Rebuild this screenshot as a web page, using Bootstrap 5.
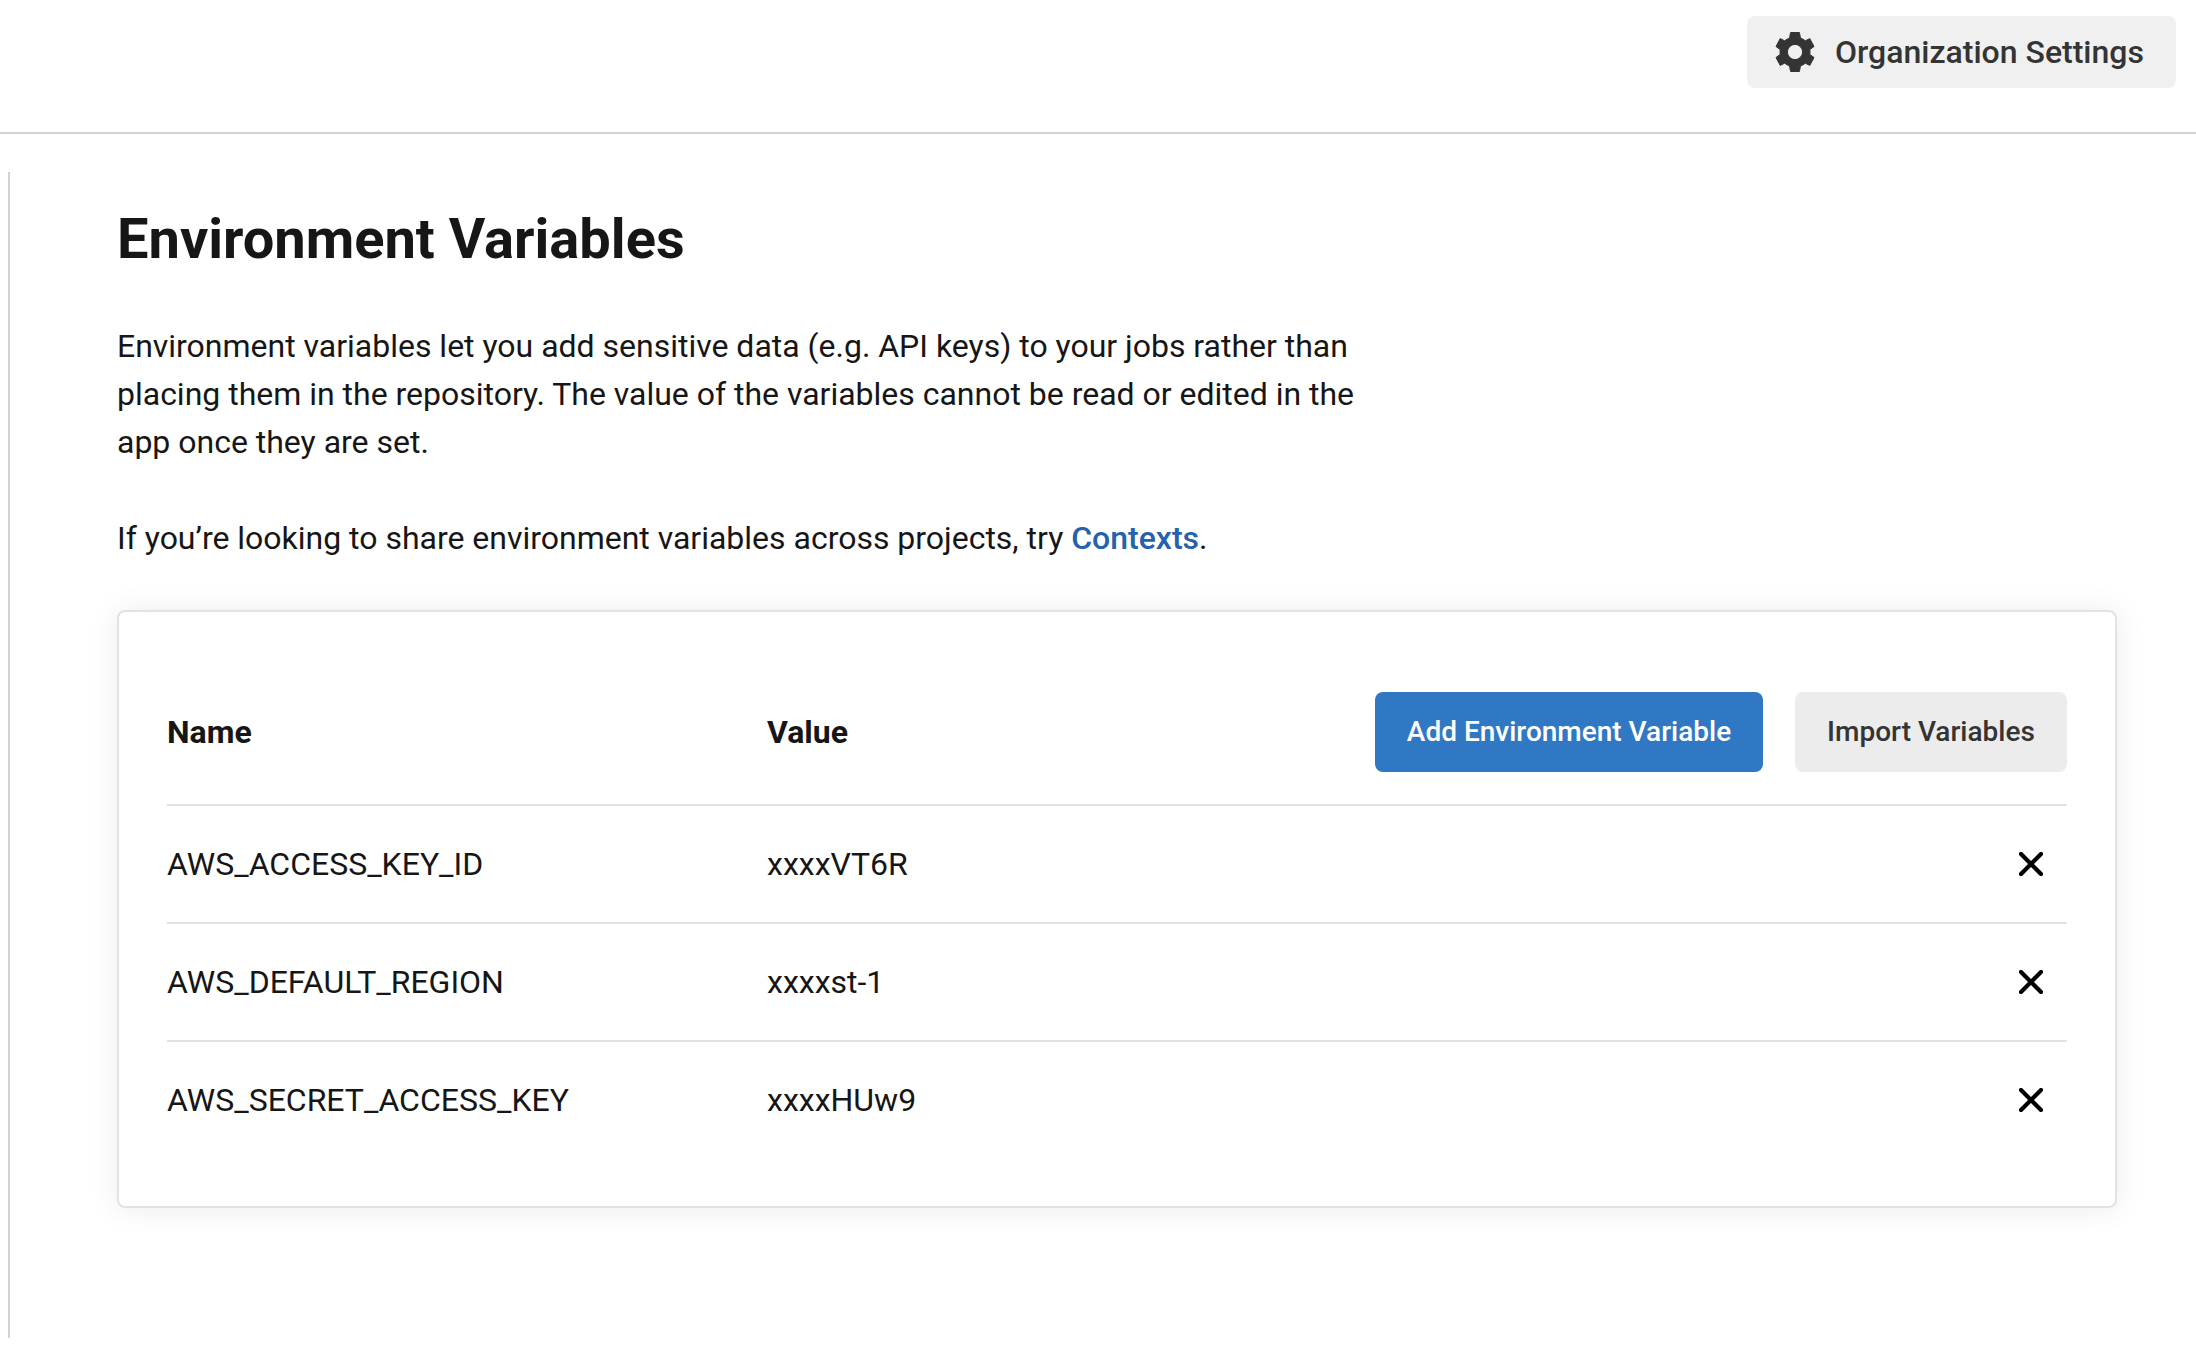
<!DOCTYPE html>
<html lang="en">
<head>
<meta charset="utf-8">
<meta name="viewport" content="width=device-width, initial-scale=1">
<title>Environment Variables</title>
<link href="https://cdn.jsdelivr.net/npm/bootstrap@5.3.0/dist/css/bootstrap.min.css" rel="stylesheet">
<style>
body{font-family:Roboto,"Liberation Sans",sans-serif;font-size:32px;line-height:48px;color:#161616;background:#fff;-webkit-font-smoothing:antialiased}
.topbar{height:134px;border-bottom:2px solid #d3d3d3;padding:16px 20px 0 0}
.btn{--bs-btn-font-weight:500;--bs-btn-border-width:0;--bs-btn-border-radius:8px;--bs-btn-font-size:28px;--bs-btn-padding-x:0;--bs-btn-padding-y:0;--bs-btn-line-height:40px;white-space:nowrap}
.btn-org{--bs-btn-bg:#f0f0f0;--bs-btn-color:#343434;--bs-btn-font-size:32px;width:429px;height:72px;gap:16px;padding-left:24px}
.btn-add{--bs-btn-bg:#3078c4;--bs-btn-color:#fff;width:388px;height:80px}
.btn-import{--bs-btn-bg:#ececec;--bs-btn-color:#343434;width:272px;height:80px}
.panel{margin:38px 0 0 8px;height:1166px;border-left:2px solid #d3d3d3;padding:35px 79px 0 107px}
.page-title{font-size:56px;line-height:64px;font-weight:700;margin-bottom:51px}
.intro{width:1250px;letter-spacing:-.01px}
.intro p{margin-bottom:48px}
.intro a{color:#2561ac;font-weight:500;text-decoration:none}
.vars{border:2px solid #e2e2e2;border-radius:8px;box-shadow:0 1px 30px rgba(0,0,0,.08);padding:80px 48px 46px;height:598px}
.vars-row{height:118px;border-bottom:2px solid #e2e2e2}
.vars-row.vars-head{height:114px;padding-bottom:32px}
.vars-row:last-child{border-bottom-color:transparent}
.vars-actions{gap:32px}
.cell-name{width:600px}
.btn-remove{width:72px;height:72px}
</style>
</head>
<body>
<header class="topbar d-flex justify-content-end align-items-start">
  <button class="btn btn-org d-flex align-items-center" type="button">
    <svg width="48" height="48" viewBox="-12 -12 24 24" fill="#343434" stroke="#343434" stroke-width=".5" stroke-linejoin="round" aria-hidden="true"><path fill-rule="evenodd" d="M-2.2-9.75H2.2L2.75-6.95Q4-6.5 5.15-5.6L7.4-6.7 9.5-2.75 7.4-1.2Q7.6 0 7.4 1.2L9.5 2.75 7.4 6.7 5.15 5.6Q4 6.5 2.75 6.95L2.2 9.75H-2.2L-2.75 6.95Q-4 6.5-5.15 5.6L-7.4 6.7-9.5 2.75-7.4 1.2Q-7.6 0-7.4-1.2L-9.5-2.75-7.4-6.7-5.15-5.6Q-4-6.5-2.75-6.95ZM0-3.8A3.8 3.8 0 1 0 0 3.8 3.8 3.8 0 1 0 0-3.8Z"/></svg>
    <span>Organization Settings</span>
  </button>
</header>
<main class="panel">
  <h1 class="page-title">Environment Variables</h1>
  <div class="intro">
    <p>Environment variables let you add sensitive data (e.g. API keys) to your jobs rather than<br>placing them in the repository. The value of the variables cannot be read or edited in the<br>app once they are set.</p>
    <p>If you’re looking to share environment variables across projects, try <a href="#">Contexts</a>.</p>
  </div>
  <section class="vars bg-white">
    <div class="vars-row vars-head d-flex align-items-center fw-bold">
      <div class="cell-name">Name</div>
      <div class="flex-grow-1">Value</div>
      <div class="vars-actions d-flex">
        <button class="btn btn-add" type="button">Add Environment Variable</button>
        <button class="btn btn-import" type="button">Import Variables</button>
      </div>
    </div>
    <div class="vars-row d-flex align-items-center">
      <div class="cell-name">AWS_ACCESS_KEY_ID</div>
      <div class="flex-grow-1">xxxxVT6R</div>
      <button class="btn btn-remove" type="button" aria-label="Remove"><svg class="d-block mx-auto" width="24" height="24" viewBox="0 0 24 24" aria-hidden="true"><path d="M2 2l20 20M22 2L2 22" stroke="#000" stroke-width="4.2" stroke-linecap="round"/></svg></button>
    </div>
    <div class="vars-row d-flex align-items-center">
      <div class="cell-name">AWS_DEFAULT_REGION</div>
      <div class="flex-grow-1">xxxxst-1</div>
      <button class="btn btn-remove" type="button" aria-label="Remove"><svg class="d-block mx-auto" width="24" height="24" viewBox="0 0 24 24" aria-hidden="true"><path d="M2 2l20 20M22 2L2 22" stroke="#000" stroke-width="4.2" stroke-linecap="round"/></svg></button>
    </div>
    <div class="vars-row d-flex align-items-center">
      <div class="cell-name">AWS_SECRET_ACCESS_KEY</div>
      <div class="flex-grow-1">xxxxHUw9</div>
      <button class="btn btn-remove" type="button" aria-label="Remove"><svg class="d-block mx-auto" width="24" height="24" viewBox="0 0 24 24" aria-hidden="true"><path d="M2 2l20 20M22 2L2 22" stroke="#000" stroke-width="4.2" stroke-linecap="round"/></svg></button>
    </div>
  </section>
</main>
<script src="https://cdn.jsdelivr.net/npm/bootstrap@5.3.0/dist/js/bootstrap.bundle.min.js"></script>
</body>
</html>
